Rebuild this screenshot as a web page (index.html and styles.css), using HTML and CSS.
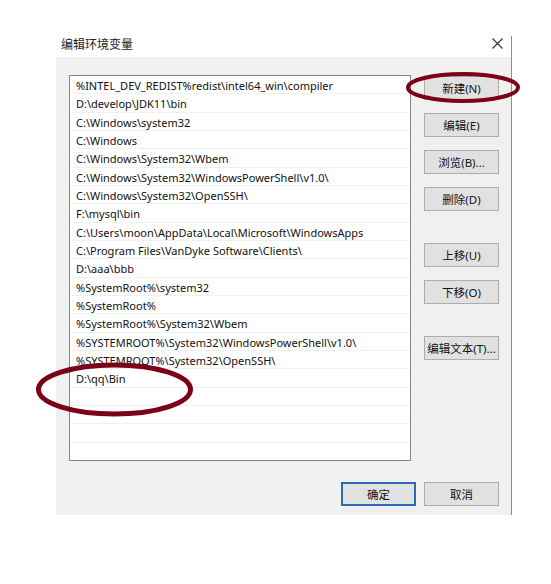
FILE: index.html
```html
<!DOCTYPE html>
<html lang="zh-CN">

<head>
    <meta charset="UTF-8">
    <meta name="viewport" content="width=device-width, initial-scale=1.0">
    <title>编辑环境变量</title>
    <link rel="stylesheet" href="styles.css">
</head>

<body>
    <div class="dialog">
        <div class="titleBar">
            <span class="title">编辑环境变量</span>
            <span class="close">
                <svg width="11" height="11" viewBox="0 0 11 11">
                    <path d="M0.5 0.5 L10.5 10.5 M10.5 0.5 L0.5 10.5" stroke="#333" stroke-width="1.1" fill="none" />
                </svg>
            </span>
        </div>
        <div class="content">
            <div class="main">
                <ul class="pathList">
                    <li>%INTEL_DEV_REDIST%redist\intel64_win\compiler</li>
                    <li>D:\develop\JDK11\bin</li>
                    <li>C:\Windows\system32</li>
                    <li>C:\Windows</li>
                    <li>C:\Windows\System32\Wbem</li>
                    <li>C:\Windows\System32\WindowsPowerShell\v1.0\</li>
                    <li>C:\Windows\System32\OpenSSH\</li>
                    <li>F:\mysql\bin</li>
                    <li>C:\Users\moon\AppData\Local\Microsoft\WindowsApps</li>
                    <li>C:\Program Files\VanDyke Software\Clients\</li>
                    <li>D:\aaa\bbb</li>
                    <li>%SystemRoot%\system32</li>
                    <li>%SystemRoot%</li>
                    <li>%SystemRoot%\System32\Wbem</li>
                    <li>%SYSTEMROOT%\System32\WindowsPowerShell\v1.0\</li>
                    <li>%SYSTEMROOT%\System32\OpenSSH\</li>
                    <li>D:\qq\Bin</li>
                    <li></li>
                    <li></li>
                    <li></li>
                    <li></li>
                </ul>
                <div class="sideBtns">
                    <div class="group">
                        <button class="btn">新建(N)</button>
                        <button class="btn">编辑(E)</button>
                        <button class="btn">浏览(B)...</button>
                        <button class="btn">删除(D)</button>
                    </div>
                    <div class="group">
                        <button class="btn">上移(U)</button>
                        <button class="btn">下移(O)</button>
                    </div>
                    <div class="group">
                        <button class="btn">编辑文本(T)...</button>
                    </div>
                </div>
            </div>
            <div class="footer">
                <button class="btn primary">确定</button>
                <button class="btn">取消</button>
            </div>
        </div>
    </div>

    <!-- 红色标注圈 -->
    <svg class="marks" width="551" height="584">
        <ellipse cx="463" cy="87.5" rx="55" ry="13.5" fill="none" stroke="#7d0019" stroke-width="4" />
        <ellipse cx="114.5" cy="389.5" rx="76" ry="24.5" fill="none" stroke="#7d0019" stroke-width="5" />
    </svg>
</body>

</html>
```

FILE: styles.css
```css
* {
    margin: 0;
    padding: 0;
    list-style: none;
    box-sizing: border-box;
}

body {
    position: relative;
    width: 551px;
    height: 584px;
    background-color: #fff;
    font-family: "Noto Sans", "Noto Sans CJK SC", sans-serif;
    font-size: 12px;
    color: #111;
}

.dialog {
    margin: 36px 0 0 56px;
    width: 456px;
    border-right: 1px solid #8e8e8e;
}

.titleBar {
    display: flex;
    justify-content: space-between;
    align-items: center;
    height: 21px;
    padding: 0 8px 6px 5px;
    background-color: #fff;
}

.titleBar .title {
    font-size: 12px;
    color: #222;
}

.titleBar .close {
    display: flex;
}

.content {
    height: 458px;
    padding: 18px 12px 0 13px;
    background-color: #f0f0f0;
}

.main {
    display: flex;
    gap: 13px;
}

.pathList {
    width: 342px;
    height: 386px;
    border: 1px solid #828790;
    background-color: #fff;
    overflow: hidden;
}

.pathList li {
    height: 18.33px;
    padding-left: 6px;
    font-size: 11px;
    line-height: 19px;
    border-bottom: 1px solid #f0f0f0;
    white-space: nowrap;
}

.sideBtns {
    display: flex;
    flex-direction: column;
    gap: 32px;
    padding-top: 1px;
}

.sideBtns .group {
    display: flex;
    flex-direction: column;
    gap: 13px;
}

.btn {
    width: 75px;
    height: 24px;
    border: 1px solid #adadad;
    background-color: #e1e1e1;
    font-family: "Noto Sans", "Noto Sans CJK SC", sans-serif;
    font-size: 11.5px;
    color: #111;
}

.footer {
    display: flex;
    justify-content: flex-end;
    gap: 8px;
    margin-top: 21px;
}

.footer .primary {
    border: 2px solid #2b6cb8;
}

.marks {
    position: absolute;
    left: 0;
    top: 0;
}
```
